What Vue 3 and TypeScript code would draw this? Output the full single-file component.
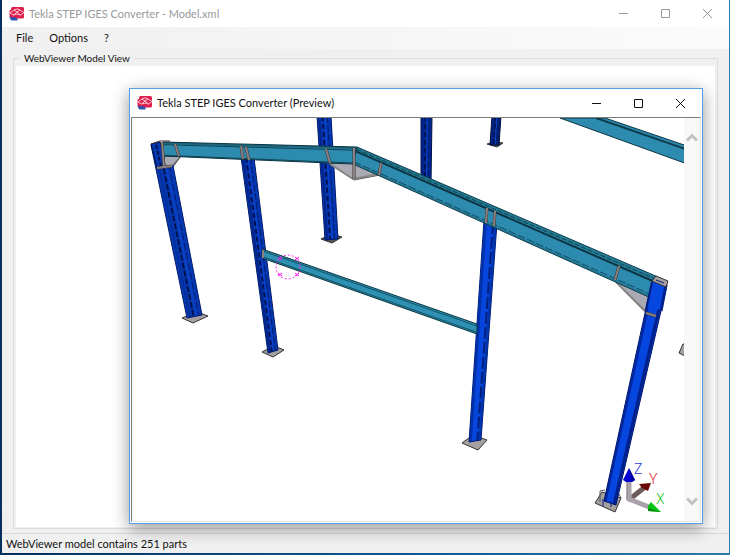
<script setup lang="ts">
import { h, type FunctionalComponent } from 'vue'

type Point = [number, number]

interface Member {
  // Corners: start-left, start-right, end-right, end-left
  corners: [Point, Point, Point, Point]
  fill: string
  edge: string
  // Lengthwise lines, as a share of the width, with colour, thickness and dashes
  seams: { at: number; color: string; width: number; dash?: string }[]
}

const menus = ['File', 'Options', '?']

const navy = '#001a6b'
const darkSeams = [
  { at: 0.16, color: '#00248a', width: 2 },
  { at: 0.4, color: '#001050', width: 2, dash: '5 3' },
  { at: 0.55, color: '#0b46d2', width: 1 },
  { at: 0.74, color: '#001a6b', width: 1, dash: '7 2' },
]

const farColumns: Member[] = [
  { corners: [[317, 116], [331, 116], [338, 239], [325, 240]], fill: '#0538b4', edge: navy, seams: darkSeams },
  { corners: [[421, 116], [432, 116], [431, 184], [421, 184]], fill: '#022a8e', edge: '#00104a', seams: darkSeams },
  { corners: [[492, 116], [501, 116], [499, 145], [490, 145]], fill: '#022475', edge: '#000c38', seams: darkSeams },
]

const nearColumns: Member[] = [
  {
    corners: [[151, 145], [169, 145], [202, 315], [187, 318]],
    fill: '#0638b2',
    edge: navy,
    seams: [
      { at: 0.2, color: '#00309e', width: 2 },
      { at: 0.44, color: '#00124f', width: 2, dash: '6 2' },
      { at: 0.62, color: '#0b42c2', width: 2 },
      { at: 0.78, color: '#001c74', width: 1, dash: '7 3' },
    ],
  },
  { corners: [[241, 157], [254, 158], [278, 350], [268, 353]], fill: '#0538b4', edge: navy, seams: darkSeams },
  {
    corners: [[484, 220], [497, 223], [481, 440], [469, 442]],
    fill: '#0646dc',
    edge: '#001c78',
    seams: [
      { at: 0.14, color: '#0030a8', width: 2 },
      { at: 0.7, color: '#00207c', width: 2, dash: '12 3' },
      { at: 0.88, color: '#0034ae', width: 2 },
    ],
  },
  {
    corners: [[652, 281], [667, 285], [616, 505], [604, 501]],
    fill: '#0646e0',
    edge: '#001366',
    seams: [
      { at: 0.12, color: '#00259a', width: 2 },
      { at: 0.84, color: '#00208c', width: 3 },
    ],
  },
]

const teal = '#2e8bb0'
const beams: Member[] = [
  {
    corners: [[163, 142], [162, 156], [353, 164], [357, 147]],
    fill: teal,
    edge: '#0b3442',
    seams: [
      { at: 0.08, color: '#1d667c', width: 2 },
      { at: 0.19, color: '#0f4354', width: 1 },
      { at: 0.94, color: '#124858', width: 1 },
    ],
  },
  {
    corners: [[357, 147], [353, 164], [651, 298], [658, 277]],
    fill: teal,
    edge: '#0b3a49',
    seams: [
      { at: 0.11, color: '#227990', width: 3 },
      { at: 0.13, color: '#0d4252', width: 1, dash: '5 2' },
      { at: 0.26, color: '#0b3442', width: 2 },
      { at: 0.86, color: '#114a5c', width: 1, dash: '8 2' },
      { at: 0.94, color: '#1f7088', width: 1 },
    ],
  },
  {
    corners: [[605, 118], [560, 118], [690, 165], [690, 147]],
    fill: teal,
    edge: '#0b3442',
    seams: [{ at: 0.2, color: '#0d3c4c', width: 2 }],
  },
  {
    corners: [[262, 249], [262, 258], [477, 334], [477, 324]],
    fill: '#3090b4',
    edge: '#083440',
    seams: [
      { at: 0.2, color: '#0d5462', width: 1 },
      { at: 0.84, color: '#0d5462', width: 1 },
    ],
  },
]

const farPlates = ['321,239 332,243 342,237 332,234', '487,144 497,147 503,143 496,142']
const nearPlates = [
  '182,318 193,323 208,316 197,312',
  '262,352 273,357 284,350 274,346',
  '462,443 478,450 487,440 473,435',
  '595,503 615,512 621,498 602,492',
]

const stiffeners = [
  'M175 144 L179 156',
  'M241 146 L243 159',
  'M246 147 L249 160',
  'M326 149 L330 163',
  'M381 163 L379 175',
  'M487 208 L486 223',
  'M495 211 L494 226',
  'M619 266 L615 280',
]

const polygon = (points: Point[]) => points.map((p) => p.join(',')).join(' ')

function seamPath(member: Member, at: number): string {
  const [a, b, c, d] = member.corners
  const mix = (p: Point, q: Point) => [p[0] + (q[0] - p[0]) * at, p[1] + (q[1] - p[1]) * at].join(' ')
  return `M${mix(a, b)} L${mix(d, c)}`
}

const MemberShape: FunctionalComponent<{ member: Member }> = ({ member }) =>
  h('g', [
    h('polygon', { points: polygon(member.corners), fill: member.fill }),
    ...member.seams.map((seam) =>
      h('path', {
        d: seamPath(member, seam.at),
        stroke: seam.color,
        'stroke-width': seam.width,
        'stroke-dasharray': seam.dash,
        fill: 'none',
      }),
    ),
    h('polygon', { points: polygon(member.corners), fill: 'none', stroke: member.edge }),
  ])
MemberShape.props = ['member']

const AppLogo: FunctionalComponent = () =>
  h('svg', { viewBox: '0 0 16 16', width: 16, height: 16, 'aria-hidden': 'true' }, [
    h('path', { d: 'M0.500 10 Q1 14.500 3.500 14.500 H8.500 V10 Z', fill: '#2756b0' }),
    h('path', {
      d: 'M3 1 H13.500 Q15 1 15 2.500 V11 Q15 12.500 13.500 12.500 H8.500 Q7 11.300 4.500 11.300 H2 Q0.500 11.300 0.500 9.500 V4.500 Q2.500 4.500 2.200 2.200 Z',
      fill: '#dc1f4c',
    }),
    h('path', {
      d: 'M1 7 L5 4 L8 6 L11 4 L15 6.500 M1 7 L4.500 9 L8 6 L11.500 9 L15 6.500 M5 4 L8 2.800 L11 4 M4.500 9 L8 8 L11.500 9',
      fill: 'none',
      stroke: '#ffd3dd',
      'stroke-width': 0.9,
    }),
  ])

const WindowButtons: FunctionalComponent = () =>
  h('div', { class: 'window-buttons' }, [
    h('button', { type: 'button', 'aria-label': 'Minimize' }, [
      h('svg', { viewBox: '0 0 11 11', width: 11, height: 11 }, [h('path', { d: 'M1 5.500 H10' })]),
    ]),
    h('button', { type: 'button', 'aria-label': 'Maximize' }, [
      h('svg', { viewBox: '0 0 11 11', width: 11, height: 11 }, [h('path', { d: 'M1.500 1.500 H9.500 V9.500 H1.500 Z' })]),
    ]),
    h('button', { type: 'button', 'aria-label': 'Close' }, [
      h('svg', { viewBox: '0 0 11 11', width: 11, height: 11 }, [h('path', { d: 'M1 1 L10 10 M10 1 L1 10' })]),
    ]),
  ])
</script>

<template>
  <div class="desktop">
    <main class="main-window">
      <header class="title-bar inactive">
        <AppLogo />
        <h1>Tekla STEP IGES Converter - Model.xml</h1>
        <WindowButtons />
      </header>
      <nav class="menu-bar">
        <button v-for="menu in menus" :key="menu" type="button">{{ menu }}</button>
      </nav>
      <fieldset class="model-group">
        <legend>WebViewer Model View</legend>
        <div class="model-area"></div>
      </fieldset>
      <footer class="status-bar">WebViewer model contains 251 parts</footer>
    </main>

    <section class="preview-window">
      <header class="title-bar">
        <AppLogo />
        <h2>Tekla STEP IGES Converter (Preview)</h2>
        <WindowButtons />
      </header>
      <div class="viewer">
        <svg class="scene" viewBox="132 118 552 403" preserveAspectRatio="xMidYMid meet">
          <polygon v-for="p in farPlates" :key="p" :points="p" class="plate dark" />
          <MemberShape v-for="(m, i) in farColumns" :key="'f' + i" :member="m" />

          <polygon points="679,353 683,344 685,344 685,356" class="plate" />
          <polygon v-for="p in nearPlates" :key="p" :points="p" class="plate" />
          <path d="M600 502 V491 L605 490 M621 498 L619 494" class="plate-line" />

          <polygon points="162,156 181,156 173,167 162,167" class="haunch" />
          <polygon points="329,163 354,180 380,175 354,163" class="haunch" />
          <path d="M330 164 L353 179 L379 174" class="haunch-edge" />
          <polygon points="615,281 651,297 646,313" class="haunch" />
          <path d="M616 282 L646 312" class="haunch-edge" />

          <MemberShape v-for="(m, i) in nearColumns" :key="'n' + i" :member="m" />
          <polygon points="164,156 181,156 172,166 165,167" class="haunch" />
          <MemberShape v-for="(m, i) in beams" :key="'b' + i" :member="m" />

          <polygon points="151,144 160,142 164,158 165,167 157,168" class="column-head" />
          <path d="M156 145 L161 166" class="head-seam" />
          <path d="M162 142 L164 167 M157 168 L172 166" class="stiffener-edge" />
          <path d="M162 142 L164 167 M157 168 L172 166" class="stiffener" />
          <path d="M151 144 L160 141 H170" class="roof-line" />

          <path d="M354 148 V179" class="stiffener-edge" />
          <path d="M354 148 V179" class="stiffener" />
          <g v-for="d in stiffeners" :key="d">
            <path :d="d" class="stiffener-edge" />
            <path :d="d" class="stiffener" />
          </g>
          <path d="M263 250 V258" class="stiffener" />

          <polygon points="652,281 667,285 662,310 646,309" fill="#0646e0" />
          <path d="M652 282 L646 310" class="head-left" />
          <path d="M666 285 L661 311" class="head-right" />
          <polygon points="656,276 668,281 666,287 652,281" class="plate" />
          <path d="M656 280 L664 283" class="cap-line" />
          <path d="M646 313 L656 316" class="stiffener-edge" />
          <path d="M646 313 L656 316" class="stiffener" />
          <path d="M603 499 V506 M611 501 V507" class="cap-line" />

          <circle cx="288" cy="267" r="12" class="orbit" />
          <path
            d="M278 257 l4 3 M278 260 l4 -3 M295 257 l4 3 M295 260 l4 -3 M278 273 l4 3 M278 276 l4 -3 M295 273 l4 3 M295 276 l4 -3"
            class="orbit-mark"
          />

          <path d="M630 499 L645 487" class="axis-shaft deep" />
          <path d="M629 499 L649 507" class="axis-shaft" />
          <path d="M629 479 V499" class="axis-shaft" />
          <path d="M627 479 V499" class="axis-shade" />
          <polygon points="629,468 635,480 632,482 626,482 623,480" fill="#0404d4" />
          <path d="M629 468 L635 480 L632 482 Z" fill="#02029a" />
          <polygon points="651,483 639,484 642,488 648,491" fill="#680606" />
          <polygon points="661,512 651,502 648,506 648,511" fill="#06c414" />
          <polygon points="661,512 648,508 648,511" fill="#048a0c" />
          <text x="634" y="474" fill="#2b38dc">Z</text>
          <text x="649" y="484" fill="#dc1624">Y</text>
          <text x="656" y="504" fill="#14c424">X</text>
        </svg>
        <div class="scroll-bar">
          <button type="button" aria-label="Scroll up">
            <svg viewBox="0 0 12 10" width="12" height="10"><path d="M1 7.500 L6 2.500 L11 7.500" /></svg>
          </button>
          <button type="button" aria-label="Scroll down">
            <svg viewBox="0 0 12 10" width="12" height="10"><path d="M1 2.500 L6 7.500 L11 2.500" /></svg>
          </button>
        </div>
      </div>
    </section>
  </div>
</template>

<style>
body {
  margin: 0;
}
</style>

<style scoped>
.desktop {
  position: relative;
  box-sizing: border-box;
  display: flex;
  height: 100vh;
  padding: 0 1px 2px 2px;
  overflow: hidden;
  background: linear-gradient(90deg, #04305c, #0f5a96 60%, #2a7ba8);
  color: #111;
  font: 11px/16px Lato, "Open Sans", sans-serif;
}

.main-window {
  flex: 1;
  display: flex;
  flex-direction: column;
  min-width: 0;
  background: #f0f0f0;
}

.title-bar {
  display: flex;
  align-items: center;
  flex: none;
  box-sizing: border-box;
  height: 28px;
  padding: 0 1px 0 7px;
  gap: 4px;
  background: #fff;
}

.title-bar.inactive {
  height: 27px;
  color: #999;
}

.title-bar h1,
.title-bar h2 {
  flex: 1;
  margin: 0;
  font-size: 11px;
  font-weight: 400;
  white-space: nowrap;
}

:deep(.window-buttons) {
  display: flex;
}

:deep(.window-buttons button) {
  display: grid;
  place-items: center;
  width: 42px;
  height: 27px;
  padding: 0;
  border: 0;
  background: none;
  color: inherit;
}

:deep(.window-buttons path) {
  fill: none;
  stroke: currentColor;
}

.menu-bar {
  display: flex;
  flex: none;
  height: 22px;
  padding-left: 6px;
  background: linear-gradient(90deg, #f0f0f0, #fbfbfb);
}

.menu-bar button {
  padding: 0 8px;
  border: 0;
  background: none;
  color: inherit;
  font: inherit;
}

.model-group {
  flex: 1;
  display: flex;
  min-width: 0;
  margin: 1px 11px 4px;
  padding: 0 2px 1px;
  border: 1px solid #dcdcdc;
}

.model-group legend {
  margin-left: 3px;
  padding: 0 5px;
  font-size: 10px;
}

.model-area {
  flex: 1;
  background: #fff;
}

.status-bar {
  flex: none;
  height: 19px;
  padding-left: 4px;
  border-top: 1px solid #d9d9d9;
  line-height: 20px;
}

.preview-window {
  position: absolute;
  inset: 88px 27px 31px 129px;
  display: flex;
  flex-direction: column;
  border: 1px solid #559be8;
  background: #fff;
  box-shadow: 0 4px 16px rgba(0, 0, 0, 0.42);
}

.viewer {
  flex: 1;
  display: flex;
  min-height: 0;
  margin: 0 1px 1px;
  border: 1px solid #e6e6e6;
  border-top-color: #7c7c7c;
  border-left-color: #7c7c7c;
}

.scene {
  flex: 1;
  min-width: 0;
  height: 100%;
}

.scene text {
  font: 300 14px Roboto, "Open Sans", sans-serif;
}

.scroll-bar {
  display: flex;
  flex: none;
  flex-direction: column;
  justify-content: space-between;
  width: 16px;
  padding: 10px 0;
  box-sizing: border-box;
  background: #f8f8f8;
}

.scroll-bar button {
  display: grid;
  place-items: center;
  height: 20px;
  padding: 0;
  border: 0;
  background: none;
}

.scroll-bar path {
  fill: none;
  stroke: #c2c2c2;
  stroke-width: 3;
}

.plate {
  fill: #a69fa0;
  stroke: #333;
}

.plate.dark {
  fill: #555;
}

.plate-line {
  fill: none;
  stroke: #555;
}

.haunch {
  fill: #aaaab4;
  stroke: #55555c;
}

.haunch-edge {
  fill: none;
  stroke: #8a8585;
  stroke-width: 2;
}

.column-head {
  fill: #0638b2;
  stroke: #00124f;
}

.head-seam {
  fill: none;
  stroke: #00124f;
  stroke-width: 2;
  stroke-dasharray: 4 2;
}

.roof-line {
  fill: none;
  stroke: #3c2c2c;
}

.stiffener-edge {
  fill: none;
  stroke: #3b3638;
  stroke-width: 3;
}

.stiffener {
  fill: none;
  stroke: #8b8080;
  stroke-width: 2;
}

.head-left {
  stroke: #001d80;
  stroke-width: 2;
}

.head-right {
  stroke: #00208c;
  stroke-width: 3;
}

.cap-line {
  fill: none;
  stroke: #061e80;
}

.orbit {
  fill: none;
  stroke: #ff2cf0;
  stroke-dasharray: 2 2;
}

.orbit-mark {
  fill: none;
  stroke: #ff10f0;
}

.axis-shaft {
  fill: none;
  stroke: #aaa2aa;
  stroke-width: 5;
  stroke-linecap: round;
}

.axis-shaft.deep {
  stroke: #6c5c5c;
}

.axis-shade {
  fill: none;
  stroke: #8a828a;
}
</style>
